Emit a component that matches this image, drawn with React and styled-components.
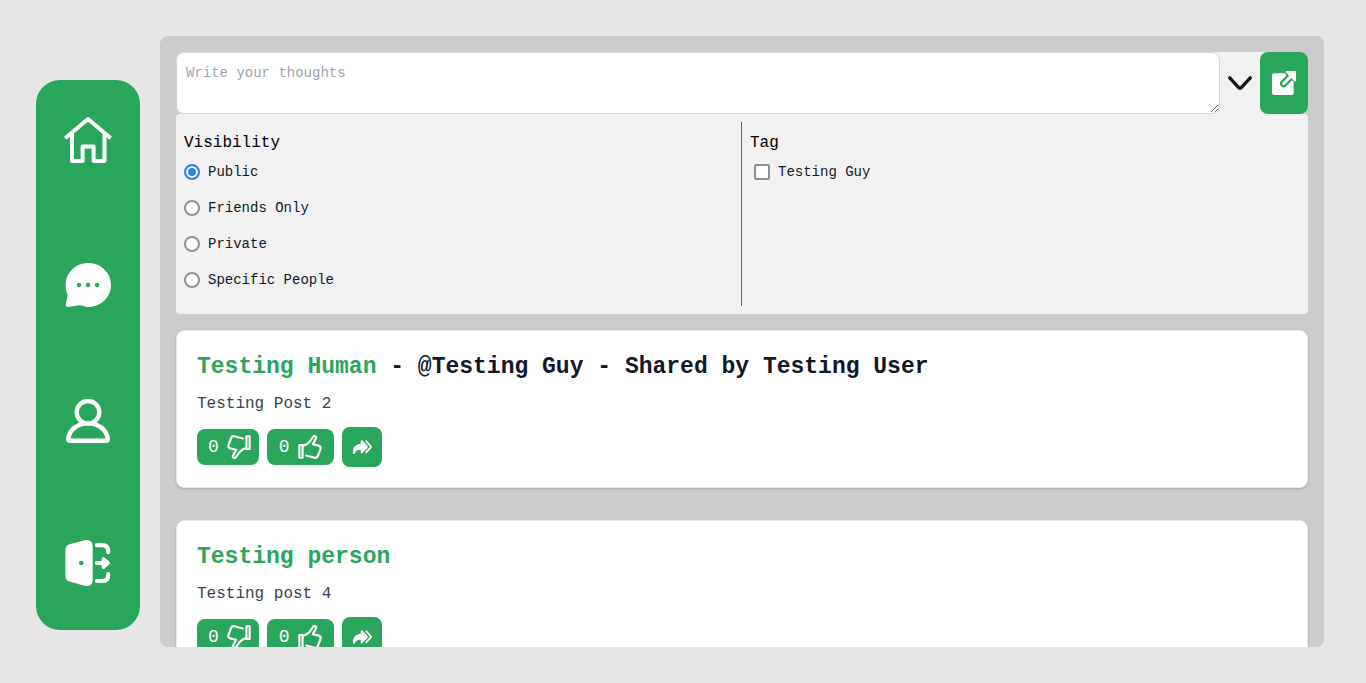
import React, { useState } from "react";
import styled, { createGlobalStyle } from "styled-components";

const green = "#2aa55c";

const GlobalStyle = createGlobalStyle`
  *, *::before, *::after { box-sizing: border-box; }
  body {
    margin: 0;
    background: #e6e6e6;
    color: #000;
    font-family: "Liberation Mono", monospace;
    font-size: 16px;
    line-height: 26px;
  }
  h2, p, fieldset, legend { margin: 0; padding: 0; border: 0; }
  button, textarea, input { font: inherit; }
  svg { display: block; flex: none; overflow: visible; }
`;

const Page = styled.div`
  display: flex;
  gap: 20px;
  height: 100vh;
  padding: 36px 42px 36px 36px;
`;

const Sidebar = styled.nav`
  flex: none;
  width: 104px;
  height: calc(100% - 61px);
  margin-top: 44px;
  padding: 36px 0 43px;
  border-radius: 24px;
  background: ${green};
  display: flex;
  flex-direction: column;
  align-items: center;
  justify-content: space-between;
`;

const NavLink = styled.a`
  color: #fff;
`;

const Feed = styled.main`
  flex: 1;
  min-width: 0;
  padding: 16px;
  border-radius: 8px;
  background: #ccc;
  overflow-y: auto;
  scrollbar-width: none;
`;

const ComposeRow = styled.div`
  display: flex;
  border-radius: 8px;
  background: #f1f1f1;
`;

const Thoughts = styled.textarea`
  flex: 1;
  min-width: 0;
  height: 62px;
  padding: 10px 9px;
  border: 1px solid #d1d5db;
  border-radius: 8px;
  background: #fff;
  color: #111827;
  font-size: 14px;
  line-height: 20px;
  &::placeholder { color: #9ca3af; }
`;

const ToggleButton = styled.button`
  padding: 0 8px;
  border: 0;
  background: none;
  color: #18181b;
`;

const PostButton = styled.button`
  padding: 0 12px;
  border: 0;
  border-radius: 8px;
  background: ${green};
  color: #fff;
`;

const Options = styled.div`
  display: grid;
  grid-template-columns: 1fr 1fr;
  padding: 8px;
  border-radius: 4px;
  background: #f1f1f1;
`;

const OptionGroup = styled.fieldset`
  min-width: 0;
  padding: 8px 0 0 ${(p) => (p.$divided ? "8px" : "0")};
  ${(p) => p.$divided && "margin-left: -1px; border-left: 1px solid #666;"}
`;

const GroupTitle = styled.legend`
  float: left;
  width: 100%;
  margin-bottom: 6px;
`;

const Option = styled.label`
  clear: both;
  display: flex;
  align-items: center;
  gap: 8px;
  margin: 0 0 16px ${(p) => (p.$inset ? "4px" : "0")};
  color: #111827;
  font-size: 14px;
  line-height: 20px;
`;

const Choice = styled.input`
  appearance: none;
  width: 16px;
  height: 16px;
  margin: 0;
  border: 2px solid #8f8f9d;
  border-radius: ${(p) => (p.type === "radio" ? "50%" : "2px")};
  background: #fff;
  &:checked {
    border-color: #3584e4;
    background: #3584e4;
    box-shadow: inset 0 0 0 2px #fff;
  }
`;

const Posts = styled.div`
  display: flex;
  flex-direction: column;
  gap: 32px;
  margin-top: 16px;
`;

const Card = styled.article`
  padding: 20px;
  border: 1px solid #e5e7eb;
  border-radius: 8px;
  background: #fff;
  box-shadow: 0 1px 3px rgba(0, 0, 0, 0.1), 0 1px 2px rgba(0, 0, 0, 0.1);
`;

const CardTitle = styled.h2`
  margin-bottom: 8px;
  color: #111827;
  font-size: 23px;
  font-weight: 700;
  line-height: 32px;
`;

const AuthorLink = styled.a`
  color: ${green};
  text-decoration: none;
`;

const CardText = styled.p`
  color: #374151;
`;

const Actions = styled.div`
  display: flex;
  align-items: center;
  gap: 8px;
  margin-top: 10px;
`;

const VoteButton = styled.button`
  display: flex;
  align-items: center;
  gap: 8px;
  height: 36px;
  padding: ${(p) => (p.$up ? "0 12px" : "0 8px 0 11px")};
  border: 0;
  border-radius: 8px;
  background: ${green};
  color: #fff;
  font-size: 18px;
`;

const ShareButton = styled.button`
  padding: 10px;
  border: 0;
  border-radius: 8px;
  background: ${green};
  color: #fff;
`;

const HomeIcon = () => (
  <svg width="48" height="48" viewBox="0 0 48 48" fill="none" stroke="currentColor" strokeWidth="4" strokeLinejoin="round">
    <path d="M1.300 22.300 24 3l22.700 19.300" />
    <path d="M8 18v27h10.600V30.400h11V45h10.900V18" />
  </svg>
);

const ChatIcon = () => (
  <svg width="48" height="48" viewBox="0 0 48 48" fill="currentColor">
    <path d="M24.300 6C37 6 47 15.700 47 28s-10 22-22.700 22c-3.800 0-6-1.700-9.700-1.700L4.500 50c-1.900.2-3.100-.8-2.700-2.700L3.700 38.500C2.500 35.500 1.600 31.500 1.600 28 1.600 15.700 11.700 6 24.300 6Z" />
    <g fill={green}>
      <circle cx="15" cy="28" r="2.200" />
      <circle cx="24" cy="28" r="2.200" />
      <circle cx="33" cy="28" r="2.200" />
    </g>
  </svg>
);

const PersonIcon = () => (
  <svg width="48" height="48" viewBox="0 0 48 48" fill="none" stroke="currentColor" strokeWidth="4.400">
    <circle cx="24" cy="14.300" r="11.300" />
    <path d="M6 42.800h36q2.300 0 1.700-2.500C42.300 31 34 25.400 24 25.400S5.700 31 4.300 40.300Q3.700 42.800 6 42.800Z" />
  </svg>
);

const ExitIcon = () => (
  <svg width="48" height="48" viewBox="0 0 48 48" fill="none" stroke="currentColor" strokeWidth="4.200" strokeLinecap="round">
    <path fill="currentColor" stroke="none" d="M5.500 5.200 20.500 1.200C25 0 28.700 2.500 28.700 6.500v35c0 4-3.700 6.500-8.200 5.300l-15-4.200C2.800 41.700 1.400 40 1.400 37V11c0-3 1.400-5 4.100-5.800Z" />
    <circle cx="17.200" cy="24" r="2.300" fill={green} stroke="none" />
    <path d="M32.900 6.200h5.200q6.100 0 6.100 6.100v.9M32.900 42h5.200q6.100 0 6.100-6.100v-.9" />
    <path d="M32.900 24H43" />
    <path fill="currentColor" d="m39.500 19.800 4.600 4.200-4.600 4.200Z" strokeWidth="3.600" strokeLinejoin="round" />
  </svg>
);

const ChevronIcon = () => (
  <svg width="24" height="24" viewBox="0 0 24 24" fill="none" stroke="currentColor" strokeWidth="3.400" strokeLinecap="round" strokeLinejoin="round">
    <path d="M1.700 6.900 10.500 16.400q1.500 1.600 3 0L22.300 6.900" />
  </svg>
);

const PostIcon = () => (
  <svg width="24" height="24" viewBox="0 0 24 24" fill="none" strokeLinecap="round">
    <rect y="2.300" width="21.700" height="21.700" rx="2.200" fill="currentColor" />
    <path d="M12.600 0h12v10.600h-2.900l-3-2.200-4.500-4Z" fill={green} />
    <path d="m11.600 12.600 8-8" stroke={green} strokeWidth="7.200" />
    <path d="m11.700 12.500 9-9" stroke="currentColor" strokeWidth="3" />
    <path d="M13.700.8q0-.8.800-.8H23q1 0 1 1v8.700q0 .8-.8.800-.6 0-1-.5l-8-8.200q-.5-.5-.5-1Z" fill="currentColor" />
  </svg>
);

const ThumbIcon = ({ up }) => (
  <svg width="24" height="24" viewBox="0 0 24 24" fill="none" stroke="currentColor" strokeWidth="2.200" strokeLinejoin="round" strokeLinecap="round">
    <g transform={up ? "rotate(180 12 12)" : undefined}>
      <rect x="19.300" y="1.200" width="3.500" height="12.800" fill="#7fc99d" strokeWidth="1.800" />
      <path d="M15.800 3.500 7.300 1.300Q5 .8 4.200 2.900L1.400 10.200Q.8 12.700 3.200 13.400l5.900 1.400-3 5.600q-.8 1.700.6 2.300 1.400.6 2.400-.7l2.300-3.400q1.500-2.400 4-3.900 1.800-1.100 3.600-1.300" />
    </g>
  </svg>
);

const ShareIcon = () => (
  <svg width="20" height="20" viewBox="0 0 20 20" fill="none">
    <path fill="currentColor" d="M8.800 4.200c0-1 .9-1.400 1.700-.7l5 5.400q.8.900 0 1.800l-5 5.400c-.8.700-1.700.3-1.700-.7v-2.500c-3-.2-4.900.7-5.900 3.300-.4 1.100-1.700 1.100-1.900-.1C.400 10.500 3.500 7.200 8.800 6.700Z" />
    <path d="m14.200 4.200 5 5.600-5 5.600" stroke="currentColor" strokeWidth="1.800" strokeLinecap="round" strokeLinejoin="round" />
  </svg>
);

const navigation = [
  ["Home", HomeIcon],
  ["Messages", ChatIcon],
  ["Profile", PersonIcon],
  ["Log out", ExitIcon],
];

const visibilities = ["Public", "Friends Only", "Private", "Specific People"];

const posts = [
  { author: "Testing Human", detail: " - @Testing Guy - Shared by Testing User", text: "Testing Post 2" },
  { author: "Testing person", detail: "", text: "Testing post 4" },
];

const Post = ({ author, detail, text }) => (
  <Card>
    <CardTitle>
      <AuthorLink href="#profile">{author}</AuthorLink>
      {detail}
    </CardTitle>
    <CardText>{text}</CardText>
    <Actions>
      <VoteButton type="button" aria-label="Dislike, 0">
        <span>0</span>
        <ThumbIcon />
      </VoteButton>
      <VoteButton type="button" $up aria-label="Like, 0">
        <span>0</span>
        <ThumbIcon up />
      </VoteButton>
      <ShareButton type="button" aria-label="Share">
        <ShareIcon />
      </ShareButton>
    </Actions>
  </Card>
);

export default function App() {
  const [visibility, setVisibility] = useState("Public");
  const [open, setOpen] = useState(true);

  return (
    <>
      <GlobalStyle />
      <Page>
        <Sidebar aria-label="Main">
          {navigation.map(([label, Icon]) => (
            <NavLink key={label} href="#" aria-label={label}>
              <Icon />
            </NavLink>
          ))}
        </Sidebar>
        <Feed>
          <form onSubmit={(e) => e.preventDefault()}>
            <ComposeRow>
              <Thoughts aria-label="Write your thoughts" placeholder="Write your thoughts" />
              <ToggleButton type="button" aria-label="Post options" aria-expanded={open} onClick={() => setOpen(!open)}>
                <ChevronIcon />
              </ToggleButton>
              <PostButton type="submit" aria-label="Post">
                <PostIcon />
              </PostButton>
            </ComposeRow>
            {open && (
              <Options>
                <OptionGroup>
                  <GroupTitle>Visibility</GroupTitle>
                  {visibilities.map((name) => (
                    <Option key={name}>
                      <Choice type="radio" name="visibility" checked={visibility === name} onChange={() => setVisibility(name)} />
                      {name}
                    </Option>
                  ))}
                </OptionGroup>
                <OptionGroup $divided>
                  <GroupTitle>Tag</GroupTitle>
                  <Option $inset>
                    <Choice type="checkbox" name="tag" />
                    Testing Guy
                  </Option>
                </OptionGroup>
              </Options>
            )}
          </form>
          <Posts>
            {posts.map((post) => (
              <Post key={post.author} {...post} />
            ))}
          </Posts>
        </Feed>
      </Page>
    </>
  );
}
